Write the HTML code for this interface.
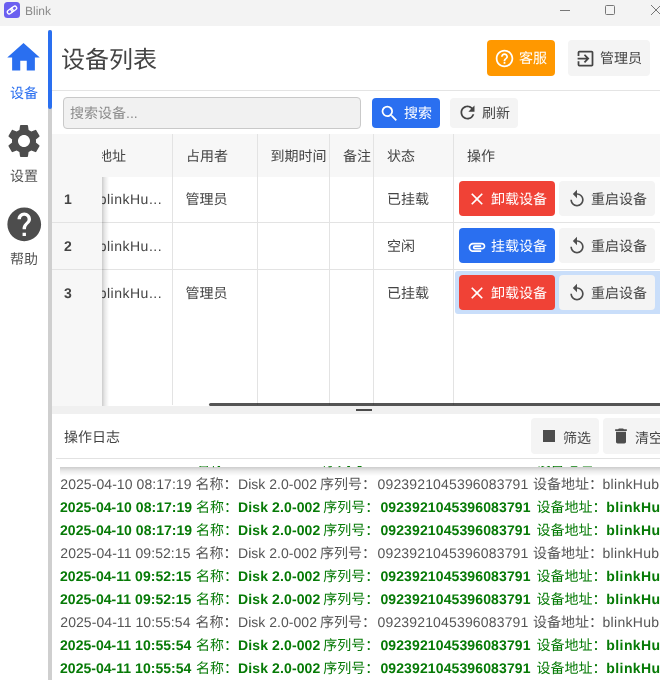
<!DOCTYPE html>
<html lang="zh-CN">
<head>
<meta charset="utf-8">
<title>Blink</title>
<style>
*{box-sizing:border-box;margin:0;padding:0}
html,body{width:660px;height:680px;overflow:hidden;background:#fff}
body{-webkit-font-smoothing:antialiased;text-rendering:geometricPrecision;will-change:transform}
body{position:relative;font-family:"Liberation Sans","Noto Sans CJK SC",sans-serif;font-size:14px;color:#444}
.abs{position:absolute}
#titlebar{left:0;top:0;width:660px;height:26px;background:#f3f3f3}
#titlebar .ttl{left:25px;top:3px;font-size:12px;color:#8a8a8a;line-height:16px}
#sidebar{left:0;top:26px;width:48px;height:654px;background:#fff}
.nav{left:0;width:48px;text-align:center;font-size:14px;line-height:18px;color:#555}
.nav.act{color:#2a6ff0}
#vbar{left:48px;top:30px;width:4px;height:650px;background:#cfcfcf;border-radius:2px 2px 0 0}
#vblue{left:48px;top:30px;width:4px;height:79px;background:#2a6ff0;border-radius:2px}
#main{left:52px;top:26px;width:608px;height:654px;background:#fff;overflow:hidden}
h1{left:61px;top:42px;font-size:24px;font-weight:400;color:#444;line-height:38px;white-space:nowrap}
.btn{height:30px;border-radius:4px;font-size:14px;line-height:30px;white-space:nowrap;color:#444;background:#f4f4f4}
.btn span{position:absolute;top:0}
.btn svg{position:absolute}
#hline{left:52px;top:90px;width:608px;height:1px;background:#e4e4e4}
#search{left:63px;top:97px;width:298px;height:32px;border:1px solid #c9c9c9;border-radius:4px;background:#f1f1f1}
#search span{position:absolute;left:6px;top:0;line-height:30px;color:#8c8c8c;font-size:14px}
#thead{left:52px;top:134px;width:608px;height:43px;background:#f7f7f7}
.th{top:135px;height:43px;line-height:43px;font-size:14px;color:#444;white-space:nowrap}
.vl{width:1px;background:#e3e3e3;top:134px;height:271px}
.hl{left:52px;width:608px;height:1px;background:#e3e3e3}
.td{font-size:14px;line-height:20px;color:#444;white-space:nowrap}
#frozen{left:52px;top:177px;width:50px;height:229px;background:#f7f7f7}
#fshadow{left:102px;top:177px;width:7px;height:229px;background:linear-gradient(90deg,rgba(0,0,0,.2),rgba(0,0,0,.09) 40%,rgba(0,0,0,0))}
.idx{left:52px;width:32px;text-align:center;font-weight:700;font-size:14px;line-height:20px;color:#444}
/*LOGCSS*/
.log{position:absolute;left:0;white-space:nowrap;font-size:14px;line-height:23px;height:23px;width:700px;color:#555}
.log span{position:absolute;top:0}
.log.g{color:#067a06}
.p .a,.p .c,.p .e,.p .h{top:-1px}
.g .a,.g .c,.g .e,.g .h{font-weight:700}
.n .a{left:4.30px;letter-spacing:0.067px}
.n .b{left:139.50px}
.n .c{left:182.00px;letter-spacing:0.030px}
.n .d{left:264.00px}
.n .e{left:321.50px;letter-spacing:0.160px}
.n .f{left:477.00px}
.n .h{left:546.50px;letter-spacing:0.300px}
.n .i{left:606.00px}
.g .a{left:4.00px;letter-spacing:0.030px}
.g .b{left:140.00px}
.g .c{left:182.00px;letter-spacing:0.120px}
.g .d{left:267.20px}
.g .e{left:324.40px;letter-spacing:0.120px}
.g .f{left:480.60px}
.g .h{left:550.30px;letter-spacing:0.420px}
.g .i{left:610.00px}
/*ENDLOGCSS*/
</style>
</head>
<body>
<div id="titlebar" class="abs">
  <svg class="abs" style="left:4px;top:2px" width="16" height="16" viewBox="0 0 16 16"><rect width="16" height="16" rx="3.500" fill="#6b5ff0"/><g transform="rotate(-36 8 8)" fill="none" stroke="#fff" stroke-width="1.350"><rect x="2.700" y="6.100" width="6.200" height="3.800" rx="1.900"/><rect x="7.100" y="6.100" width="6.200" height="3.800" rx="1.900"/></g></svg>
  <div class="abs ttl">Blink</div>
  <svg class="abs" style="left:555px;top:0" width="105" height="26" viewBox="0 0 105 26" fill="none" stroke="#777" stroke-width="1"><path d="M5 10.5h10"/><rect x="50.500" y="5.500" width="9" height="9" rx="1"/><path d="M96 5l10 10M106 5l-10 10"/></svg>
</div>

<div id="sidebar" class="abs"></div>
<svg class="abs" style="left:4.250px;top:38px" width="39" height="39" viewBox="0 0 24 24"><path d="M10 20v-6h4v6h5v-8h3L12 3 2 12h3v8z" fill="#2a6ff0"/></svg>
<div class="abs nav act" style="top:84px">设备</div>
<svg class="abs" style="left:4.100px;top:121px" width="40" height="40" viewBox="0 0 24 24"><path fill="#4d4d4d" d="M19.140 12.940c.040-.300.060-.610.060-.940 0-.320-.020-.640-.070-.940l2.030-1.580a.490.490 0 0 0 .120-.610l-1.920-3.320a.488.488 0 0 0-.590-.220l-2.390.960c-.500-.380-1.030-.700-1.620-.940l-.360-2.540a.484.484 0 0 0-.480-.410h-3.840c-.240 0-.430.170-.470.410l-.360 2.540c-.590.240-1.130.570-1.620.940l-2.390-.960c-.220-.080-.470 0-.590.220L2.740 8.870c-.120.210-.080.470.120.610l2.030 1.580c-.050.300-.090.630-.090.940s.020.640.070.940l-2.030 1.580a.490.490 0 0 0-.120.610l1.920 3.320c.120.220.370.290.590.220l2.390-.960c.500.380 1.030.700 1.620.940l.360 2.540c.050.240.240.410.480.410h3.840c.240 0 .440-.170.470-.410l.360-2.540c.590-.240 1.130-.560 1.620-.940l2.390.960c.220.080.470 0 .590-.220l1.920-3.320c.120-.220.070-.470-.120-.610l-2.010-1.580zM12 15.600c-1.980 0-3.600-1.620-3.600-3.600s1.620-3.600 3.600-3.600 3.600 1.620 3.600 3.600-1.620 3.600-3.600 3.600z"/></svg>
<div class="abs nav" style="top:167px">设置</div>
<svg class="abs" style="left:3.800px;top:203.550px" width="40.500" height="40.500" viewBox="0 0 24 24"><path fill="#4d4d4d" d="M12 2C6.480 2 2 6.480 2 12s4.480 10 10 10 10-4.480 10-10S17.520 2 12 2zm1 17h-2v-2h2v2zm2.070-7.750l-.900.920C13.450 12.900 13 13.500 13 15h-2v-.500c0-1.100.450-2.100 1.170-2.830l1.240-1.260c.370-.360.590-.860.590-1.410 0-1.100-.900-2-2-2s-2 .900-2 2H8c0-2.210 1.790-4 4-4s4 1.790 4 4c0 .880-.360 1.680-.930 2.250z"/></svg>
<div class="abs nav" style="top:250px">帮助</div>
<div id="vbar" class="abs"></div>
<div id="vblue" class="abs"></div>

<!-- header -->
<h1 class="abs">设备列表</h1>
<div class="abs btn" style="left:487px;top:40px;width:68px;height:36px;background:#ff9800;color:#fff;line-height:36px">
  <svg style="left:7px;top:7.500px" width="21" height="21" viewBox="0 0 24 24"><path fill="#fff" d="M11 18h2v-2h-2v2zm1-16C6.480 2 2 6.480 2 12s4.480 10 10 10 10-4.480 10-10S17.520 2 12 2zm0 18c-4.410 0-8-3.590-8-8s3.590-8 8-8 8 3.590 8 8-3.590 8-8 8zm0-14c-2.210 0-4 1.790-4 4h2c0-1.100.900-2 2-2s2 .900 2 2c0 2-3 1.750-3 5h2c0-2.250 3-2.500 3-5 0-2.210-1.790-4-4-4z"/></svg>
  <span style="left:32px">客服</span>
</div>
<div class="abs btn" style="left:568px;top:40px;width:82px;height:36px;line-height:36px">
  <svg style="left:7px;top:7.500px" width="21" height="21" viewBox="0 0 24 24"><path fill="#444" d="M10.090 15.590L11.500 17l5-5-5-5-1.410 1.410L12.670 11H3v2h9.670l-2.580 2.590zM19 3H5a2 2 0 0 0-2 2v4h2V5h14v14H5v-4H3v4a2 2 0 0 0 2 2h14c1.100 0 2-.900 2-2V5c0-1.100-.900-2-2-2z"/></svg>
  <span style="left:32px">管理员</span>
</div>
<div id="hline" class="abs"></div>

<!-- toolbar -->
<div id="search" class="abs"><span>搜索设备...</span></div>
<div class="abs btn" style="left:372px;top:98px;width:68px;background:#2a6ff0;color:#fff">
  <svg style="left:7px;top:4.500px" width="21" height="21" viewBox="0 0 24 24"><path fill="#fff" d="M15.500 14h-.790l-.280-.270A6.471 6.471 0 0 0 16 9.500 6.500 6.500 0 1 0 9.500 16c1.610 0 3.090-.590 4.230-1.570l.270.280v.790l5 4.990L20.490 19l-4.990-5zm-6 0C7.010 14 5 11.990 5 9.500S7.010 5 9.500 5 14 7.010 14 9.500 11.990 14 9.500 14z"/></svg>
  <span style="left:32px">搜索</span>
</div>
<div class="abs btn" style="left:450px;top:98px;width:68px">
  <svg style="left:7px;top:4.250px" width="21" height="21" viewBox="0 0 24 24"><path fill="#444" d="M17.650 6.350A7.958 7.958 0 0 0 12 4c-4.420 0-7.990 3.580-7.990 8s3.570 8 7.990 8c3.730 0 6.840-2.550 7.730-6h-2.080A5.990 5.990 0 0 1 12 18c-3.310 0-6-2.690-6-6s2.690-6 6-6c1.660 0 3.140.690 4.220 1.780L13 11h7V4l-2.350 2.350z"/></svg>
  <span style="left:32px">刷新</span>
</div>

<!-- table -->
<div id="thead" class="abs"></div>
<div class="abs hl" style="top:222px"></div>
<div class="abs hl" style="top:269px"></div>
<div class="abs vl" style="left:172px"></div>
<div class="abs vl" style="left:257px"></div>
<div class="abs vl" style="left:329px"></div>
<div class="abs vl" style="left:373px"></div>
<div class="abs vl" style="left:453px"></div>

<div class="abs th" style="left:102px;width:30px;overflow:hidden"><span style="margin-left:-4px">地址</span></div>
<div class="abs th" style="left:186px">占用者</div>
<div class="abs th" style="left:270.500px">到期时间</div>
<div class="abs th" style="left:343px">备注</div>
<div class="abs th" style="left:387px">状态</div>
<div class="abs th" style="left:467px">操作</div>

<!-- rows -->
<div class="abs td" style="left:98.700px;top:189px;letter-spacing:.5px">blinkHu...</div>
<div class="abs td" style="left:98.700px;top:236px;letter-spacing:.5px">blinkHu...</div>
<div class="abs td" style="left:98.700px;top:283px;letter-spacing:.5px">blinkHu...</div>
<div class="abs td" style="left:185.600px;top:189px">管理员</div>
<div class="abs td" style="left:185.600px;top:283px">管理员</div>
<div class="abs td" style="left:387px;top:189px">已挂载</div>
<div class="abs td" style="left:387px;top:236px">空闲</div>
<div class="abs td" style="left:387px;top:283px">已挂载</div>

<div id="frozen" class="abs"></div>
<div id="fshadow" class="abs"></div>
<div class="abs hl" style="top:222px;width:50px"></div>
<div class="abs hl" style="top:269px;width:50px"></div>
<div class="abs idx" style="top:189px">1</div>
<div class="abs idx" style="top:236px">2</div>
<div class="abs idx" style="top:283px">3</div>

<!-- selected cell -->
<div class="abs" style="left:455px;top:271px;width:210px;height:43px;background:#c9defa;border-radius:3px"></div>
<!-- action buttons -->
<div class="abs btn" style="left:459px;top:181px;width:96px;height:35px;line-height:35px;background:#f04236;color:#fff">
  <svg style="left:8px;top:8px" width="20" height="20" viewBox="0 0 24 24"><path fill="#fff" d="M19 6.410L17.590 5 12 10.590 6.410 5 5 6.410 10.590 12 5 17.590 6.410 19 12 13.410 17.590 19 19 17.590 13.410 12z"/></svg>
  <span style="left:32px;top:1.200px">卸载设备</span>
</div>
<div class="abs btn" style="left:559px;top:181px;width:96px;height:35px;line-height:35px">
  <svg style="left:8px;top:8px" width="20" height="20" viewBox="0 0 24 24"><path fill="#4d4d4d" d="M12 5V1L7 6l5 5V7c3.310 0 6 2.690 6 6s-2.690 6-6 6-6-2.690-6-6H4c0 4.420 3.580 8 8 8s8-3.580 8-8-3.580-8-8-8z"/></svg>
  <span style="left:32px;top:1.200px">重启设备</span>
</div>
<div class="abs btn" style="left:459px;top:228px;width:96px;height:35px;line-height:35px;background:#2a6ff0;color:#fff">
  <svg style="left:8px;top:8.500px" width="20" height="20" viewBox="0 0 24 24"><path fill="#fff" d="M2 12.500C2 9.460 4.460 7 7.500 7H18c2.210 0 4 1.790 4 4s-1.790 4-4 4H9.500a2.500 2.500 0 0 1 0-5H17v2H9.410c-.550 0-.550 1 0 1H18c1.100 0 2-.900 2-2s-.900-2-2-2H7.500C5.570 9 4 10.570 4 12.500S5.570 16 7.500 16H17v2H7.500C4.460 18 2 15.540 2 12.500z"/></svg>
  <span style="left:32px;top:1.200px">挂载设备</span>
</div>
<div class="abs btn" style="left:559px;top:228px;width:96px;height:35px;line-height:35px">
  <svg style="left:8px;top:8px" width="20" height="20" viewBox="0 0 24 24"><path fill="#4d4d4d" d="M12 5V1L7 6l5 5V7c3.310 0 6 2.690 6 6s-2.690 6-6 6-6-2.690-6-6H4c0 4.420 3.580 8 8 8s8-3.580 8-8-3.580-8-8-8z"/></svg>
  <span style="left:32px;top:1.200px">重启设备</span>
</div>
<div class="abs btn" style="left:459px;top:275px;width:96px;height:35px;line-height:35px;background:#f04236;color:#fff">
  <svg style="left:8px;top:8px" width="20" height="20" viewBox="0 0 24 24"><path fill="#fff" d="M19 6.410L17.590 5 12 10.590 6.410 5 5 6.410 10.590 12 5 17.590 6.410 19 12 13.410 17.590 19 19 17.590 13.410 12z"/></svg>
  <span style="left:32px;top:1.200px">卸载设备</span>
</div>
<div class="abs btn" style="left:559px;top:275px;width:96px;height:35px;line-height:35px">
  <svg style="left:8px;top:8px" width="20" height="20" viewBox="0 0 24 24"><path fill="#4d4d4d" d="M12 5V1L7 6l5 5V7c3.310 0 6 2.690 6 6s-2.690 6-6 6-6-2.690-6-6H4c0 4.420 3.580 8 8 8s8-3.580 8-8-3.580-8-8-8z"/></svg>
  <span style="left:32px;top:1.200px">重启设备</span>
</div>

<!-- h scrollbar -->
<div class="abs" style="left:209px;top:403px;width:460px;height:3px;background:rgba(0,0,0,.67);border-radius:2px"></div>
<!-- splitter -->
<div class="abs" style="left:52px;top:406px;width:608px;height:8px;background:#f0f0f0"></div>
<div class="abs" style="left:356px;top:409px;width:16px;height:2px;background:#4a4a4a"></div>
<!-- log header -->
<div class="abs" style="left:64px;top:426.500px;font-size:14px;line-height:20px;color:#444">操作日志</div>
<div class="abs btn" style="left:531px;top:418px;width:68px;height:36px;line-height:36px">
  <div class="abs" style="left:12px;top:12px;width:12px;height:12px;background:#4d4d4d"></div>
  <span style="left:32px;top:1.500px">筛选</span>
</div>
<div class="abs btn" style="left:603px;top:418px;width:68px;height:36px;line-height:36px">
  <svg style="left:8px;top:8px" width="20" height="20" viewBox="0 0 24 24"><path fill="#4d4d4d" d="M6 19c0 1.100.900 2 2 2h8c1.100 0 2-.900 2-2V7H6v12zM19 4h-3.500l-1-1h-5l-1 1H5v2h14V4z"/></svg>
  <span style="left:32px;top:1.500px">清空</span>
</div>
<div class="abs" style="left:56px;top:458px;width:604px;height:1px;background:#e2e2e2"></div>
<!-- log body -->
<div class="abs" id="logbox" style="left:56px;top:466px;width:604px;height:214px;overflow:hidden">
<div class="log g p" style="top:-16px"><span class="a">2025-04-10 08:17:19</span><span class="b">名称：</span><span class="c">Disk 2.0-002</span><span class="d">序列号：</span><span class="e">0923921045396083791</span><span class="f">设备地址：</span><span class="h">blinkHub</span><span class="i">挂载成功</span></div>
<div class="log n" style="top:7px"><span class="a">2025-04-10 08:17:19</span><span class="b">名称：</span><span class="c">Disk 2.0-002</span><span class="d">序列号：</span><span class="e">0923921045396083791</span><span class="f">设备地址：</span><span class="h">blinkHub</span><span class="i">设备已连接</span></div>
<div class="log g" style="top:30px"><span class="a">2025-04-10 08:17:19</span><span class="b">名称：</span><span class="c">Disk 2.0-002</span><span class="d">序列号：</span><span class="e">0923921045396083791</span><span class="f">设备地址：</span><span class="h">blinkHub</span><span class="i">挂载成功</span></div>
<div class="log g" style="top:53px"><span class="a">2025-04-10 08:17:19</span><span class="b">名称：</span><span class="c">Disk 2.0-002</span><span class="d">序列号：</span><span class="e">0923921045396083791</span><span class="f">设备地址：</span><span class="h">blinkHub</span><span class="i">挂载成功</span></div>
<div class="log n" style="top:76px"><span class="a">2025-04-11 09:52:15</span><span class="b">名称：</span><span class="c">Disk 2.0-002</span><span class="d">序列号：</span><span class="e">0923921045396083791</span><span class="f">设备地址：</span><span class="h">blinkHub</span><span class="i">设备已连接</span></div>
<div class="log g" style="top:99px"><span class="a">2025-04-11 09:52:15</span><span class="b">名称：</span><span class="c">Disk 2.0-002</span><span class="d">序列号：</span><span class="e">0923921045396083791</span><span class="f">设备地址：</span><span class="h">blinkHub</span><span class="i">挂载成功</span></div>
<div class="log g" style="top:122px"><span class="a">2025-04-11 09:52:15</span><span class="b">名称：</span><span class="c">Disk 2.0-002</span><span class="d">序列号：</span><span class="e">0923921045396083791</span><span class="f">设备地址：</span><span class="h">blinkHub</span><span class="i">挂载成功</span></div>
<div class="log n" style="top:145px"><span class="a">2025-04-11 10:55:54</span><span class="b">名称：</span><span class="c">Disk 2.0-002</span><span class="d">序列号：</span><span class="e">0923921045396083791</span><span class="f">设备地址：</span><span class="h">blinkHub</span><span class="i">设备已连接</span></div>
<div class="log g" style="top:168px"><span class="a">2025-04-11 10:55:54</span><span class="b">名称：</span><span class="c">Disk 2.0-002</span><span class="d">序列号：</span><span class="e">0923921045396083791</span><span class="f">设备地址：</span><span class="h">blinkHub</span><span class="i">挂载成功</span></div>
<div class="log g" style="top:191px"><span class="a">2025-04-11 10:55:54</span><span class="b">名称：</span><span class="c">Disk 2.0-002</span><span class="d">序列号：</span><span class="e">0923921045396083791</span><span class="f">设备地址：</span><span class="h">blinkHub</span><span class="i">挂载成功</span></div>
<div class="abs" style="left:4px;top:1px;width:600px;height:9px;background:linear-gradient(180deg,rgba(0,0,0,.2),rgba(0,0,0,.08) 45%,rgba(0,0,0,0))"></div>
</div>

</body>
</html>
